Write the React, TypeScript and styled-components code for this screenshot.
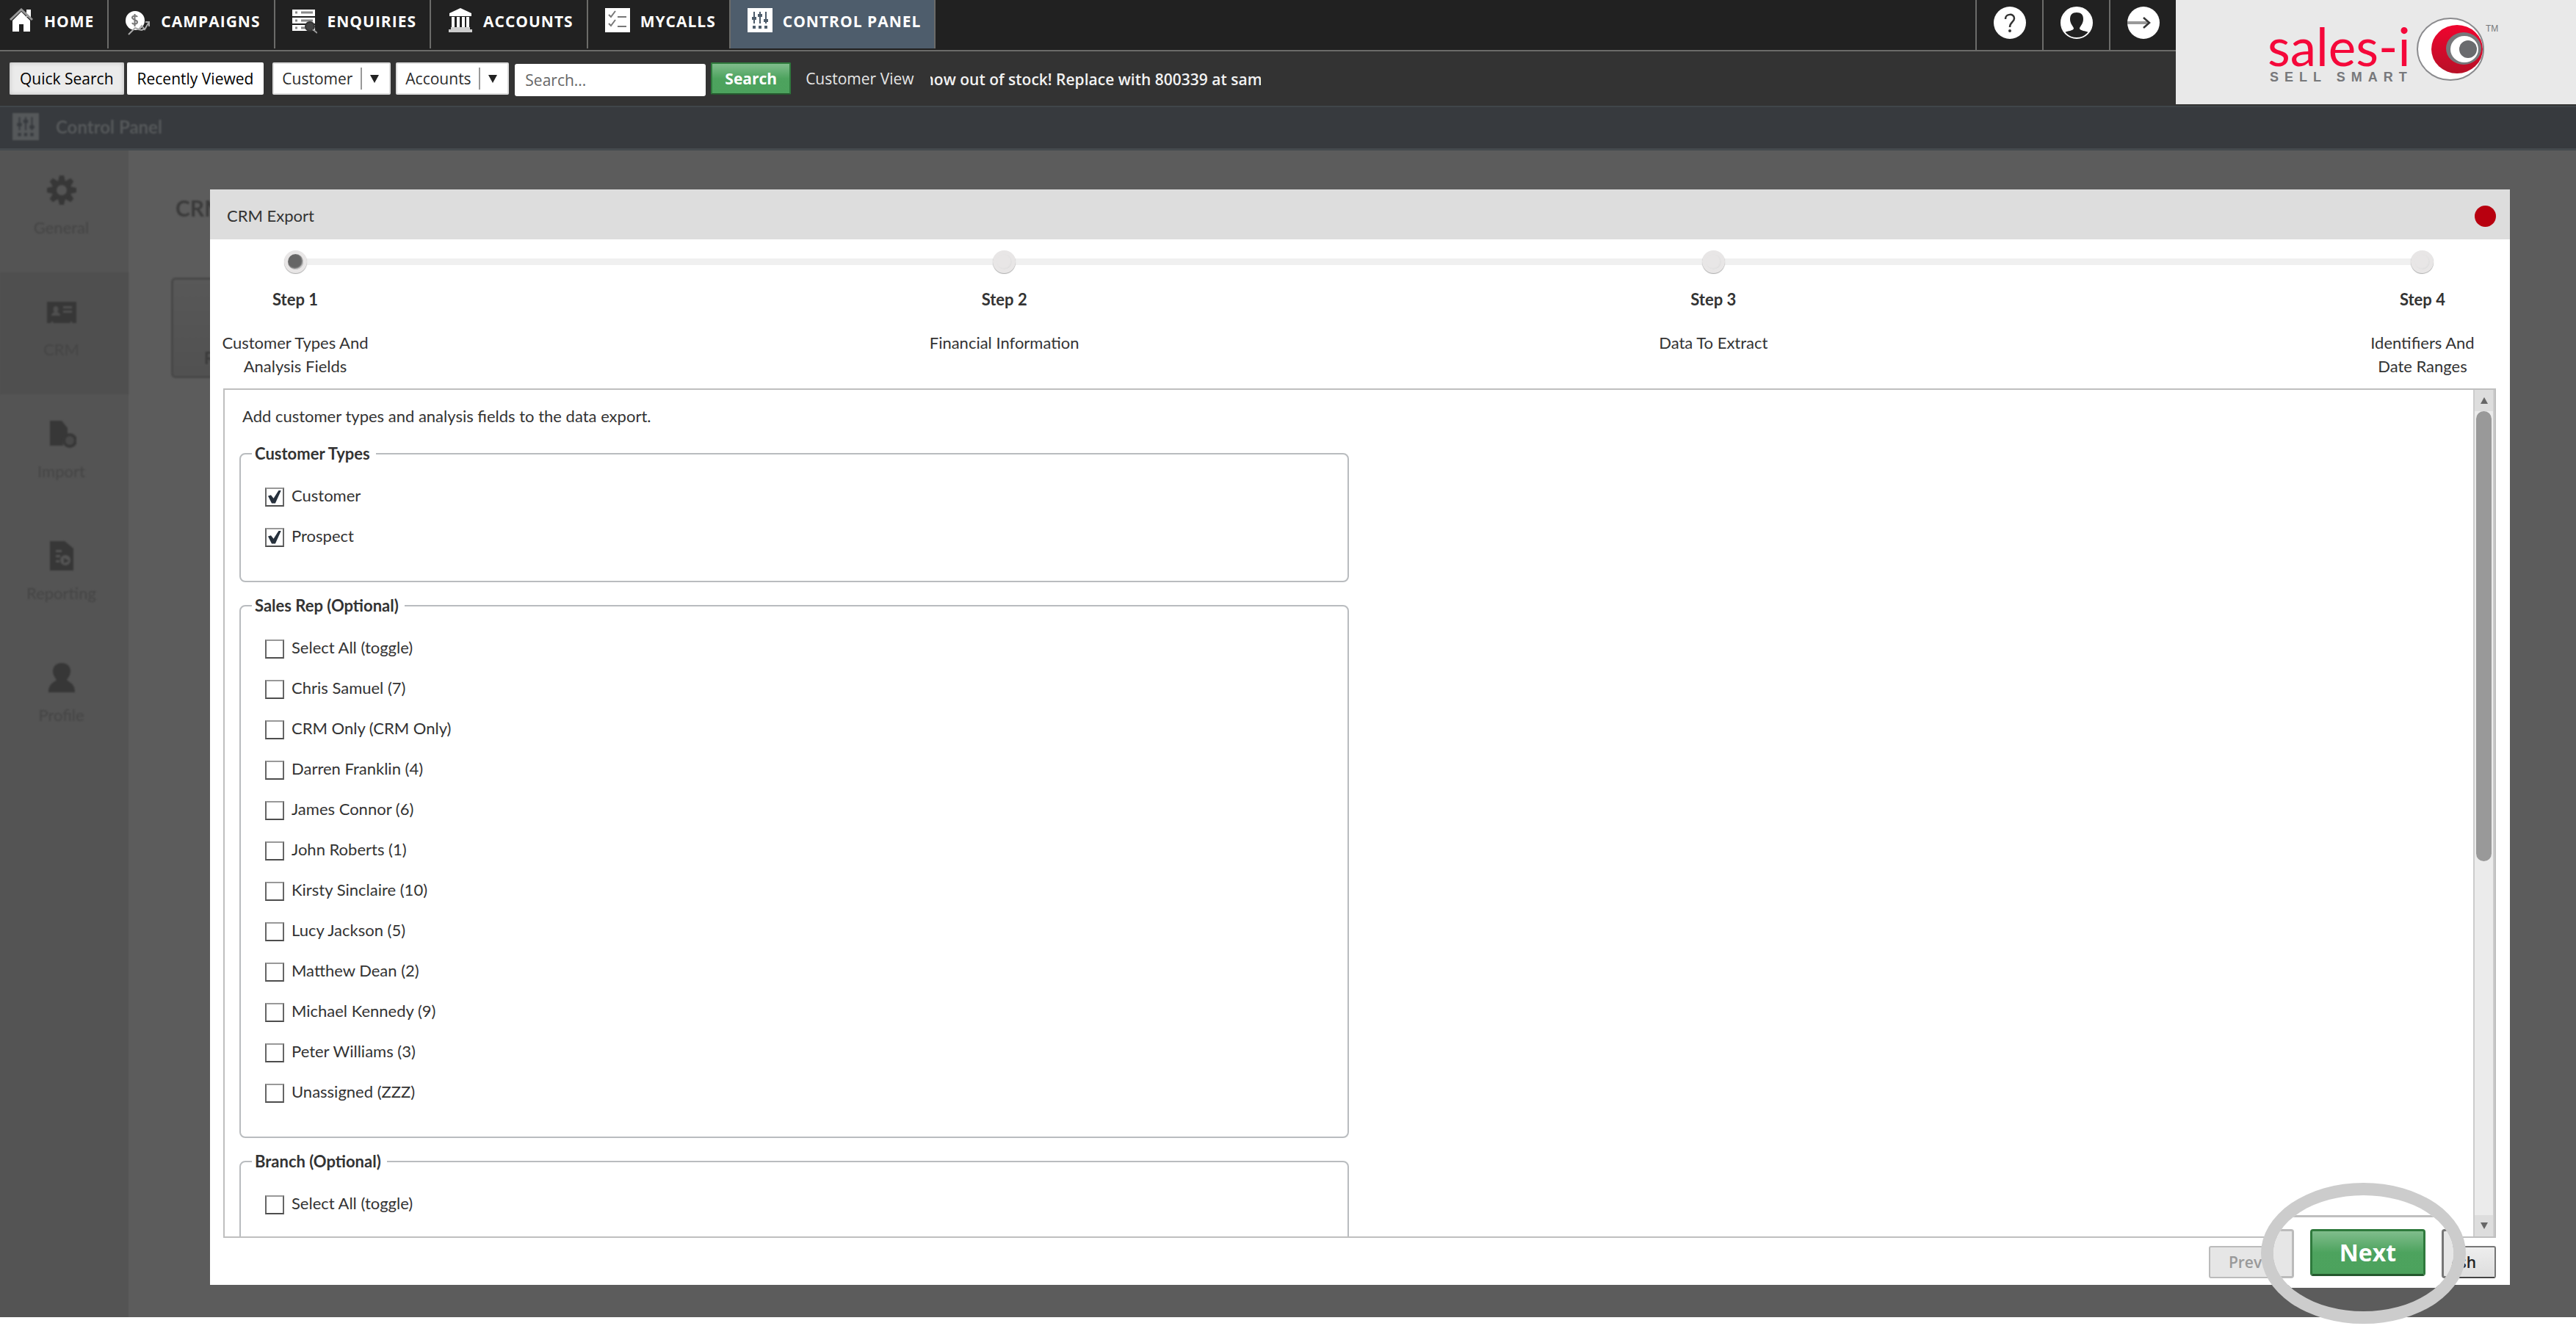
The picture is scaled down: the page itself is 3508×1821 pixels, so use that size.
import React from "react";
import styled, { createGlobalStyle, css } from "styled-components";

const ui = `"Open Sans", "Noto Sans", sans-serif`;
const body = `Lato, "Open Sans", sans-serif`;

const GlobalStyle = createGlobalStyle`
  *, *::before, *::after { box-sizing: border-box; }
  body { margin: 0; background: #fff; color: #333; font-family: ${body}; font-size: 22px; line-height: 32px; }
  button, input, select { font: inherit; margin: 0; }
  ul, ol { list-style: none; margin: 0; padding: 0; }
  h1, h2, p { margin: 0; font-size: inherit; font-weight: inherit; }
  svg { display: block; flex: none; }
`;

const Screen = styled.div`
  display: flex;
  flex-direction: column;
  min-height: 100vh;
  padding-bottom: 27px;
  background: #fff;
`;
const Page = styled.div`
  position: relative;
  display: flex;
  flex: 1;
  flex-direction: column;
  background: #5c5c5c;
`;

/* ---------- header ---------- */

const Header = styled.header`
  display: flex;
  height: 144px;
  background: #333;
`;
const HeaderMain = styled.div`
  flex: 1;
  min-width: 0;
`;
const TopNav = styled.nav`
  display: flex;
  justify-content: space-between;
  height: 70px;
  background: #212121;
  border-bottom: 2px solid #6b6b69;
  font-family: ${ui};
`;
const NavList = styled.ul`
  display: flex;
`;
const NavLink = styled.a<{ $active?: boolean; $first?: boolean }>`
  display: flex;
  align-items: flex-start;
  gap: 14px;
  height: 66px;
  padding: 11px 18px 0 ${(p) => (p.$first ? 12 : 23)}px;
  border-right: 2px solid #6b6b69;
  background: ${(p) => (p.$active ? "#4e5d6c" : "transparent")};
  color: #fff;
  font-size: 21px;
  font-weight: 700;
  letter-spacing: 1px;
  text-decoration: none;
  text-transform: uppercase;
  white-space: nowrap;
  line-height: 37px;
`;
const UtilityList = styled.div`
  display: flex;
`;
const UtilityButton = styled.button`
  display: flex;
  justify-content: center;
  width: 91px;
  height: 68px;
  padding: 9px 0 0;
  border: 0;
  border-left: 2px solid #6b6b69;
  background: transparent;
`;
const SearchBar = styled.form`
  display: flex;
  align-items: flex-start;
  padding: 15px 13px;
  font-family: ${ui};
  font-size: 21px;
`;
const TabButton = styled.button<{ $pressed?: boolean }>`
  height: 44px;
  padding: 0 14px;
  border: 0;
  border-radius: 2px;
  margin-right: ${(p) => (p.$pressed ? 4 : 12)}px;
  background: ${(p) => (p.$pressed ? "#ebebeb" : "#fff")};
  box-shadow: ${(p) => (p.$pressed ? "inset 0 0 6px #bbb" : "none")};
  color: #000;
  font-weight: 500;
  white-space: nowrap;
`;
const SelectWrap = styled.label`
  position: relative;
  display: block;
  margin-right: 7px;
  &::before {
    content: "";
    position: absolute;
    right: 39px;
    top: 7px;
    width: 2px;
    height: 30px;
    background: #999;
  }
  &::after {
    content: "";
    position: absolute;
    right: 16px;
    top: 17px;
    border: 6px solid transparent;
    border-top: 11px solid #222;
    border-bottom: 0;
  }
`;
const Select = styled.select`
  appearance: none;
  height: 44px;
  padding: 0 49px 0 11px;
  border: 2px solid #ddd;
  border-radius: 2px;
  background: #fff;
  color: #2b2b2b;
`;
const SearchInput = styled.input`
  width: 260px;
  height: 44px;
  margin: 2px 7px 0 1px;
  padding: 0 14px;
  border: 0;
  border-radius: 3px;
  background: #fff;
  &::placeholder { color: #666; opacity: 1; }
`;
const green = css`
  border: 2px solid #2f7a3d;
  border-bottom-color: #25592e;
  background: linear-gradient(#80bd8c, #4da35e 50%, #4ca25d);
  color: #fff;
  font-weight: 700;
`;
const SearchButton = styled.button`
  ${green}
  height: 44px;
  padding: 0 17px;
  border-radius: 2px;
`;
const ViewLink = styled.a`
  margin-left: 20px;
  color: #e6e6e6;
  font-weight: 500;
  line-height: 44px;
  text-decoration: none;
  white-space: nowrap;
`;
const Ticker = styled.div`
  display: flex;
  width: 450px;
  margin-left: 22px;
  overflow: hidden;
  color: #f2f2f2;
  font-weight: 600;
  line-height: 46px;
  white-space: nowrap;
`;
const TickerText = styled.span`
  margin-left: -8px;
`;
const Brand = styled.div`
  width: 545px;
  height: 142px;
  background: #e9e9e9;
`;
const TitleBar = styled.div`
  display: flex;
  align-items: center;
  gap: 23px;
  height: 61px;
  padding: 0 0 3px 17px;
  border-top: 2px solid #40464a;
  border-bottom: 3px solid #454a4e;
  background: #373a3e;
  color: #55585a;
  font-size: 24px;
  font-weight: 700;
`;
const Soft = styled.span`
  filter: blur(1px);
`;

/* ---------- dimmed page ---------- */

const Workspace = styled.div`
  display: flex;
  flex: 1;
`;
const Sidebar = styled.nav`
  width: 175px;
  background: #545454;
`;
const SideLink = styled.a<{ $active?: boolean }>`
  display: flex;
  flex-direction: column;
  align-items: center;
  gap: 15px;
  height: 166px;
  padding: 34px 8px 0 0;
  background: ${(p) => (p.$active ? "#4f4f4f" : "transparent")};
  color: #454545;
  text-decoration: none;
  filter: blur(1px);
  svg { fill: #373737; }
`;
const Content = styled.main`
  padding: 62px 58px;
  filter: blur(1px);
`;
const PageTitle = styled.h1`
  margin-bottom: 79px;
  padding-left: 6px;
  color: #3b3b3b;
  font-size: 30px;
  font-weight: 700;
`;
const TileButton = styled.button`
  display: flex;
  align-items: flex-end;
  width: 260px;
  height: 137px;
  padding: 0 42px 8px;
  border: 3px solid #484848;
  border-radius: 6px;
  background: linear-gradient(#585858, #515151);
  color: #3a3a3a;
  font-weight: 700;
`;

/* ---------- dialog ---------- */

const Dialog = styled.section`
  position: absolute;
  inset: 258px 90px 44px 286px;
  display: flex;
  flex-direction: column;
  background: #fff;
`;
const DialogHeader = styled.header`
  display: flex;
  align-items: center;
  justify-content: space-between;
  height: 68px;
  padding: 4px 19px 0 23px;
  background: #ddd;
  color: #333;
`;
const CloseButton = styled.button`
  width: 29px;
  height: 29px;
  padding: 0;
  border: 0;
  border-radius: 50%;
  background: #b8000f;
`;
const Steps = styled.ol`
  position: relative;
  display: flex;
  justify-content: space-between;
  padding: 15px 9px 14px 6px;
  &::before {
    content: "";
    position: absolute;
    left: 116px;
    right: 119px;
    top: 26px;
    height: 9px;
    background: #f0f0f0;
  }
`;
const Step = styled.li`
  position: relative;
  display: flex;
  flex-direction: column;
  align-items: center;
  width: 220px;
  text-align: center;
`;
const StepDot = styled.span<{ $current: boolean }>`
  width: 31px;
  height: 31px;
  border: 5px solid #e8e6e6;
  border-radius: 50%;
  background: ${(p) => (p.$current ? "#666" : "#e8e6e6")};
  box-shadow: inset -1px -1px 2px #ddd, 0 1px 1px #aaa;
`;
const StepName = styled.strong`
  margin: 20px 0 27px;
`;
const ScrollBox = styled.div`
  display: flex;
  flex: 1;
  min-height: 0;
  margin: 0 19px 0 18px;
  border: 2px solid #bfbfbf;
`;
const ScrollBody = styled.div`
  flex: 1;
  min-width: 0;
  overflow: hidden;
  padding: 20px;
`;
const Intro = styled.p`
  padding-left: 4px;
  margin-bottom: 19px;
`;
const FieldSet = styled.fieldset`
  width: 50%;
  min-width: 0;
  margin: 0 0 16px;
  padding: 13px 33px 34px;
  border: 2px solid #b9bcbf;
  border-radius: 8px;
`;
const Legend = styled.legend`
  margin-left: -18px;
  padding: 0 8px 0 4px;
  font-weight: 700;
`;
const CheckRow = styled.label`
  display: flex;
  align-items: center;
  gap: 10px;
  height: 55px;
`;
const CheckBox = styled.input`
  appearance: none;
  display: grid;
  place-items: center;
  width: 26px;
  height: 26px;
  margin: 4px 0 0;
  border: 2px solid #666;
  border-top-color: #999;
  border-bottom-color: #4d4d4d;
  background: #fff;
  &:checked::before {
    content: "";
    width: 18px;
    height: 18px;
    background: #26303c;
    clip-path: polygon(0 45%, 22% 38%, 42% 62%, 82% 0, 100% 0, 55% 100%, 28% 100%);
  }
`;
const ScrollBar = styled.div`
  display: flex;
  flex-direction: column;
  width: 29px;
  border-left: 2px solid #ccc;
  border-right: 2px solid #ccc;
  background: #ebebeb;
`;
const ScrollArrow = styled.button<{ $down?: boolean }>`
  display: grid;
  place-items: center;
  height: 29px;
  padding: 0;
  border: 0;
  background: #ddd;
  &::before {
    content: "";
    border: 5px solid transparent;
    border-bottom: 9px solid #666;
    border-top: 0;
    transform: ${(p) => (p.$down ? "rotate(180deg)" : "none")};
  }
`;
const ScrollTrack = styled.div`
  flex: 1;
  padding: 0 2px;
`;
const ScrollThumb = styled.div`
  height: 56%;
  border-radius: 11px;
  background: #999;
`;
const DialogFooter = styled.footer`
  display: flex;
  justify-content: flex-end;
  gap: 178px;
  padding: 11px 19px 9px;
  font-family: ${ui};
  font-size: 21px;
`;
const GreyButton = styled.button`
  height: 44px;
  padding: 0 25px;
  border: 2px solid #777;
  border-bottom-color: #444;
  border-radius: 3px;
  background: linear-gradient(#eee, #ddd);
  color: #222;
  font-weight: 600;
  &:disabled {
    border-color: #bbb;
    background: #e6e6e6;
    color: #999;
  }
`;

/* Magnifier ring that calls out the Next button. */
const Lens = styled.div`
  position: absolute;
  right: 60px;
  bottom: -53px;
  width: 279px;
  height: 192px;
  overflow: hidden;
  border: 17px solid #ccc;
  border-radius: 50%;
  background: linear-gradient(#fff 126px, #5c5c5c 126px) padding-box;
`;
const LensEdge = styled.div`
  height: 30px;
  border-bottom: 3px solid #bfbfbf;
`;
const LensRow = styled.div`
  display: flex;
  gap: 22px;
  padding-top: 16px;
`;
const LensPart = styled.div<{ $side: "left" | "right" }>`
  width: ${(p) => (p.$side === "left" ? 28 : 16)}px;
  height: 67px;
  border: 3px solid ${(p) => (p.$side === "left" ? "#bbb" : "#777")};
  border-${(p) => p.$side}: 0;
  border-radius: ${(p) => (p.$side === "left" ? "0 4px 4px 0" : "4px 0 0 4px")};
  background: #e6e6e6;
`;
const NextButton = styled.button`
  ${green}
  width: 157px;
  height: 64px;
  padding: 0;
  border-width: 3px;
  border-radius: 4px;
  font-family: ${ui};
  font-size: 32px;
`;

/* ---------- icons ---------- */

const HomeIcon = () => (
  <svg width="34" height="34" viewBox="0 0 34 34">
    <path d="M24 2h6v10h-6z" fill="#fff" />
    <path d="M5 17 17 5l12 12v15h-9V22h-6v10H5z" fill="#fff" />
    <path d="M2 16 17 2l15 14" fill="none" stroke="#999" strokeWidth="3" />
  </svg>
);
const CampaignIcon = () => (
  <svg width="34" height="38" viewBox="0 0 34 38">
    <circle cx="13" cy="17" r="13" fill="#fff" />
    <path d="M16 12c-1-2-7-2-7 1s7 3 7 6-6 4-7 1M12.500 8v17" fill="none" stroke="#777" strokeWidth="2" />
    <path d="m4 36 9-9 5 2 4-5 4 5 6-10M27 19h5v6M17 29l5 1 6-3" fill="none" stroke="#aaa" strokeWidth="2" />
  </svg>
);
const EnquiryIcon = () => (
  <svg width="34" height="35" viewBox="0 0 34 35">
    <path d="M0 2h31v9H0zM0 13h31v8H0zM0 23h31v8H0z" fill="#fff" />
    <path d="M4 6h3M12 6h16M4 17h3M12 17h16M4 27h3M12 27h8" stroke="#888" strokeWidth="3" />
    <circle cx="24" cy="25" r="6" fill="#444" stroke="#333" strokeWidth="2" />
    <path d="m28 29 6 5" stroke="#999" strokeWidth="2" />
  </svg>
);
const AccountsIcon = () => (
  <svg width="34" height="34" viewBox="0 0 34 34">
    <path d="M17 0 32 7v4H2V7zM5 12h4v14H5zM12 12h4v14h-4zM19 12h4v14h-4zM25 12h4v14h-4z" fill="#fff" />
    <path d="M4 26h26v3h3v4H1v-4h3z" fill="#ccc" />
  </svg>
);
const CallsIcon = () => (
  <svg width="34" height="33" viewBox="0 0 34 33">
    <path d="M0 0h34v33H0z" fill="#fff" />
    <path d="m5 9 3 3 6-8M5 21l3 3 6-8M17 12h12M17 25h12" fill="none" stroke="#777" strokeWidth="2" />
  </svg>
);
const PanelIcon = ({ w = 34, h = 33, fg = "#fff", bg = "#4e5d6c" }) => (
  <svg width={w} height={h} viewBox="0 0 34 33" preserveAspectRatio="none">
    <path d="M0 0h34v33H0z" fill={fg} />
    <path d="M9 5v16M17 5v16M25 5v16" stroke={bg} strokeWidth="2" />
    <path d="M6 12h6v4H6zM14 8h6v4h-6zM22 15h6v4h-6zM7 24h4v4H7zM15 24h4v4h-4zM23 24h4v4h-4z" fill={bg} />
  </svg>
);
const HelpIcon = () => (
  <svg width="44" height="44" viewBox="0 0 44 44">
    <circle cx="22" cy="22" r="22" fill="#fff" />
    <path d="M16 17c0-8 12-8 12-1 0 5-6 5-6 12" fill="none" stroke="#333" strokeWidth="2.500" />
    <circle cx="22" cy="33" r="2" fill="#333" />
  </svg>
);
const UserIcon = () => (
  <svg width="44" height="44" viewBox="0 0 44 44">
    <circle cx="22" cy="22" r="21" fill="#212121" stroke="#fff" strokeWidth="2" />
    <path d="M22 1a21 21 0 0 0-16 34c4-2 11-2 12-5 0-3-5-6-5-13 0-6 3-9 9-9s9 3 9 9c0 7-5 10-5 13 1 3 8 3 12 5A21 21 0 0 0 22 1z" fill="#fff" />
  </svg>
);
const ExitIcon = () => (
  <svg width="44" height="44" viewBox="0 0 44 44">
    <circle cx="22" cy="22" r="22" fill="#fff" />
    <path d="M0 22h29" stroke="#999" strokeWidth="4" />
    <path d="m22 15 8 7-8 7" fill="none" stroke="#333" strokeWidth="2.500" />
  </svg>
);
const Logo = () => (
  <svg width="545" height="142" viewBox="0 0 545 142" role="img" aria-label="sales-i sell smart">
    <defs>
      <linearGradient id="red" x1="0" y1="0" x2="0" y2="1">
        <stop offset="0" stopColor="#f0052f" />
        <stop offset="1" stopColor="#b81027" />
      </linearGradient>
    </defs>
    <text x="125" y="90" fontFamily="Lato, sans-serif" fontSize="71" fill="#f5083a">sales-i</text>
    <text x="128" y="111" fontFamily="Liberation Sans, Arial, sans-serif" fontSize="18" fontWeight="700" letterSpacing="8" fill="#77787b">SELL SMART</text>
    <ellipse cx="374" cy="67" rx="45" ry="42" fill="#fff" stroke="#8a8a8d" strokeWidth="2" />
    <ellipse cx="383" cy="67" rx="35" ry="33" fill="url(#red)" />
    <ellipse cx="392" cy="66" rx="24" ry="22" fill="#77787b" />
    <ellipse cx="393" cy="67" rx="19" ry="18" fill="#fff" />
    <circle cx="398" cy="67" r="12" fill="#6a6b6e" />
    <text x="422" y="43" fontFamily="Liberation Sans, Arial, sans-serif" fontSize="12" fill="#77787b">TM</text>
  </svg>
);
const GearIcon = () => (
  <svg width="40" height="40" viewBox="-20 -20 40 40">
    {[0, 45, 90, 135].map((a) => (
      <path key={a} d="M-3-20h6l2 8v24l-2 8h-6l-2-8v-24z" transform={`rotate(${a})`} />
    ))}
    <circle r="13" />
    <circle r="7" style={{ fill: "#545454" }} />
  </svg>
);
const CardIcon = () => (
  <svg width="40" height="40" viewBox="0 0 40 40">
    <path fillRule="evenodd" d="M0 6h40v29h-5l-2-3-2 3H9l-2-3-2 3H0zM6 25h12c0-4-3-4-4-5 3-4 1-8-2-8s-5 4-2 8c-1 1-4 1-4 5zM22 12v3h12v-3zM22 18v3h12v-3z" />
  </svg>
);
const ImportIcon = () => (
  <svg width="40" height="40" viewBox="0 0 40 40">
    <path d="M4 2h16l8 10v8c-6 2-8 8-6 16H4z" />
    <circle cx="31" cy="29" r="8" style={{ stroke: "#373737", strokeWidth: 4, fill: "#484848" }} />
  </svg>
);
const ReportIcon = () => (
  <svg width="40" height="40" viewBox="0 0 40 40">
    <path fillRule="evenodd" d="M4 0h20l12 10v30H4zM12 12v3h8v-3zM12 19v3h6v-3zM12 26v3h5v-3zM25 19a7 7 0 1 0 .1 0zM23 23l7 4-7 3z" />
  </svg>
);
const ProfileIcon = () => (
  <svg width="40" height="40" viewBox="0 0 40 40">
    <path d="M20 0c8 0 12 5 12 11 0 5-3 9-5 12 2 3 11 4 11 17H2c0-13 9-14 11-17-2-3-5-7-5-12C8 5 12 0 20 0z" />
  </svg>
);

/* ---------- data ---------- */

const navItems = [
  { label: "Home", icon: <HomeIcon /> },
  { label: "Campaigns", icon: <CampaignIcon /> },
  { label: "Enquiries", icon: <EnquiryIcon /> },
  { label: "Accounts", icon: <AccountsIcon /> },
  { label: "MyCalls", icon: <CallsIcon /> },
  { label: "Control Panel", icon: <PanelIcon />, active: true },
];
const sideItems = [
  { label: "General", icon: <GearIcon /> },
  { label: "CRM", icon: <CardIcon />, active: true },
  { label: "Import", icon: <ImportIcon /> },
  { label: "Reporting", icon: <ReportIcon /> },
  { label: "Profile", icon: <ProfileIcon /> },
];
const steps = [
  ["Customer Types And", "Analysis Fields"],
  ["Financial Information"],
  ["Data To Extract"],
  ["Identifiers And", "Date Ranges"],
];
const groups = [
  { legend: "Customer Types", checked: true, options: ["Customer", "Prospect"] },
  {
    legend: "Sales Rep (Optional)",
    options: [
      "Select All (toggle)",
      "Chris Samuel (7)",
      "CRM Only (CRM Only)",
      "Darren Franklin (4)",
      "James Connor (6)",
      "John Roberts (1)",
      "Kirsty Sinclaire (10)",
      "Lucy Jackson (5)",
      "Matthew Dean (2)",
      "Michael Kennedy (9)",
      "Peter Williams (3)",
      "Unassigned (ZZZ)",
    ],
  },
  { legend: "Branch (Optional)", options: ["Select All (toggle)"] },
];

export default function App() {
  return (
    <>
      <GlobalStyle />
      <Screen>
        <Page>
          <Header>
            <HeaderMain>
              <TopNav aria-label="Main">
                <NavList>
                  {navItems.map((n, i) => (
                    <li key={n.label}>
                      <NavLink href="#" $active={n.active} $first={i === 0}>
                        {n.icon}
                        {n.label}
                      </NavLink>
                    </li>
                  ))}
                </NavList>
                <UtilityList>
                  <UtilityButton aria-label="Help"><HelpIcon /></UtilityButton>
                  <UtilityButton aria-label="My account"><UserIcon /></UtilityButton>
                  <UtilityButton aria-label="Log out"><ExitIcon /></UtilityButton>
                </UtilityList>
              </TopNav>
              <SearchBar onSubmit={(e: React.FormEvent) => e.preventDefault()}>
                <TabButton type="button" $pressed>Quick Search</TabButton>
                <TabButton type="button">Recently Viewed</TabButton>
                <SelectWrap>
                  <Select aria-label="Record type"><option>Customer</option></Select>
                </SelectWrap>
                <SelectWrap>
                  <Select aria-label="Search in"><option>Accounts</option></Select>
                </SelectWrap>
                <SearchInput type="text" aria-label="Search" placeholder="Search..." />
                <SearchButton type="submit">Search</SearchButton>
                <ViewLink href="#">Customer View</ViewLink>
                <Ticker>
                  <TickerText>now out of stock! Replace with 800339 at sam</TickerText>
                </Ticker>
              </SearchBar>
            </HeaderMain>
            <Brand><Logo /></Brand>
          </Header>
          <TitleBar>
            <Soft><PanelIcon w={36} h={37} fg="#55585a" bg="#373a3e" /></Soft>
            <Soft>Control Panel</Soft>
          </TitleBar>
          <Workspace>
            <Sidebar aria-label="Settings">
              {sideItems.map((s) => (
                <SideLink key={s.label} href="#" $active={s.active}>
                  {s.icon}
                  {s.label}
                </SideLink>
              ))}
            </Sidebar>
            <Content>
              <PageTitle>CRM</PageTitle>
              <TileButton>R</TileButton>
            </Content>
          </Workspace>

          <Dialog role="dialog" aria-labelledby="dialog-title">
            <DialogHeader>
              <h2 id="dialog-title">CRM Export</h2>
              <CloseButton aria-label="Close" />
            </DialogHeader>
            <Steps>
              {steps.map((lines, i) => (
                <Step key={lines[0]}>
                  <StepDot $current={i === 0} />
                  <StepName>Step {i + 1}</StepName>
                  {lines.map((line) => (
                    <span key={line}>{line}</span>
                  ))}
                </Step>
              ))}
            </Steps>
            <ScrollBox>
              <ScrollBody>
                <Intro>Add customer types and analysis fields to the data export.</Intro>
                {groups.map((g) => (
                  <FieldSet key={g.legend}>
                    <Legend>{g.legend}</Legend>
                    {g.options.map((o) => (
                      <CheckRow key={o}>
                        <CheckBox type="checkbox" defaultChecked={g.checked} />
                        {o}
                      </CheckRow>
                    ))}
                  </FieldSet>
                ))}
              </ScrollBody>
              <ScrollBar>
                <ScrollArrow aria-label="Scroll up" />
                <ScrollTrack><ScrollThumb /></ScrollTrack>
                <ScrollArrow aria-label="Scroll down" $down />
              </ScrollBar>
            </ScrollBox>
            <DialogFooter>
              <GreyButton disabled>Prev</GreyButton>
              <GreyButton>Finish</GreyButton>
            </DialogFooter>
            <Lens>
              <LensEdge />
              <LensRow>
                <LensPart $side="left" />
                <NextButton>Next</NextButton>
                <LensPart $side="right" />
              </LensRow>
            </Lens>
          </Dialog>
        </Page>
      </Screen>
    </>
  );
}
